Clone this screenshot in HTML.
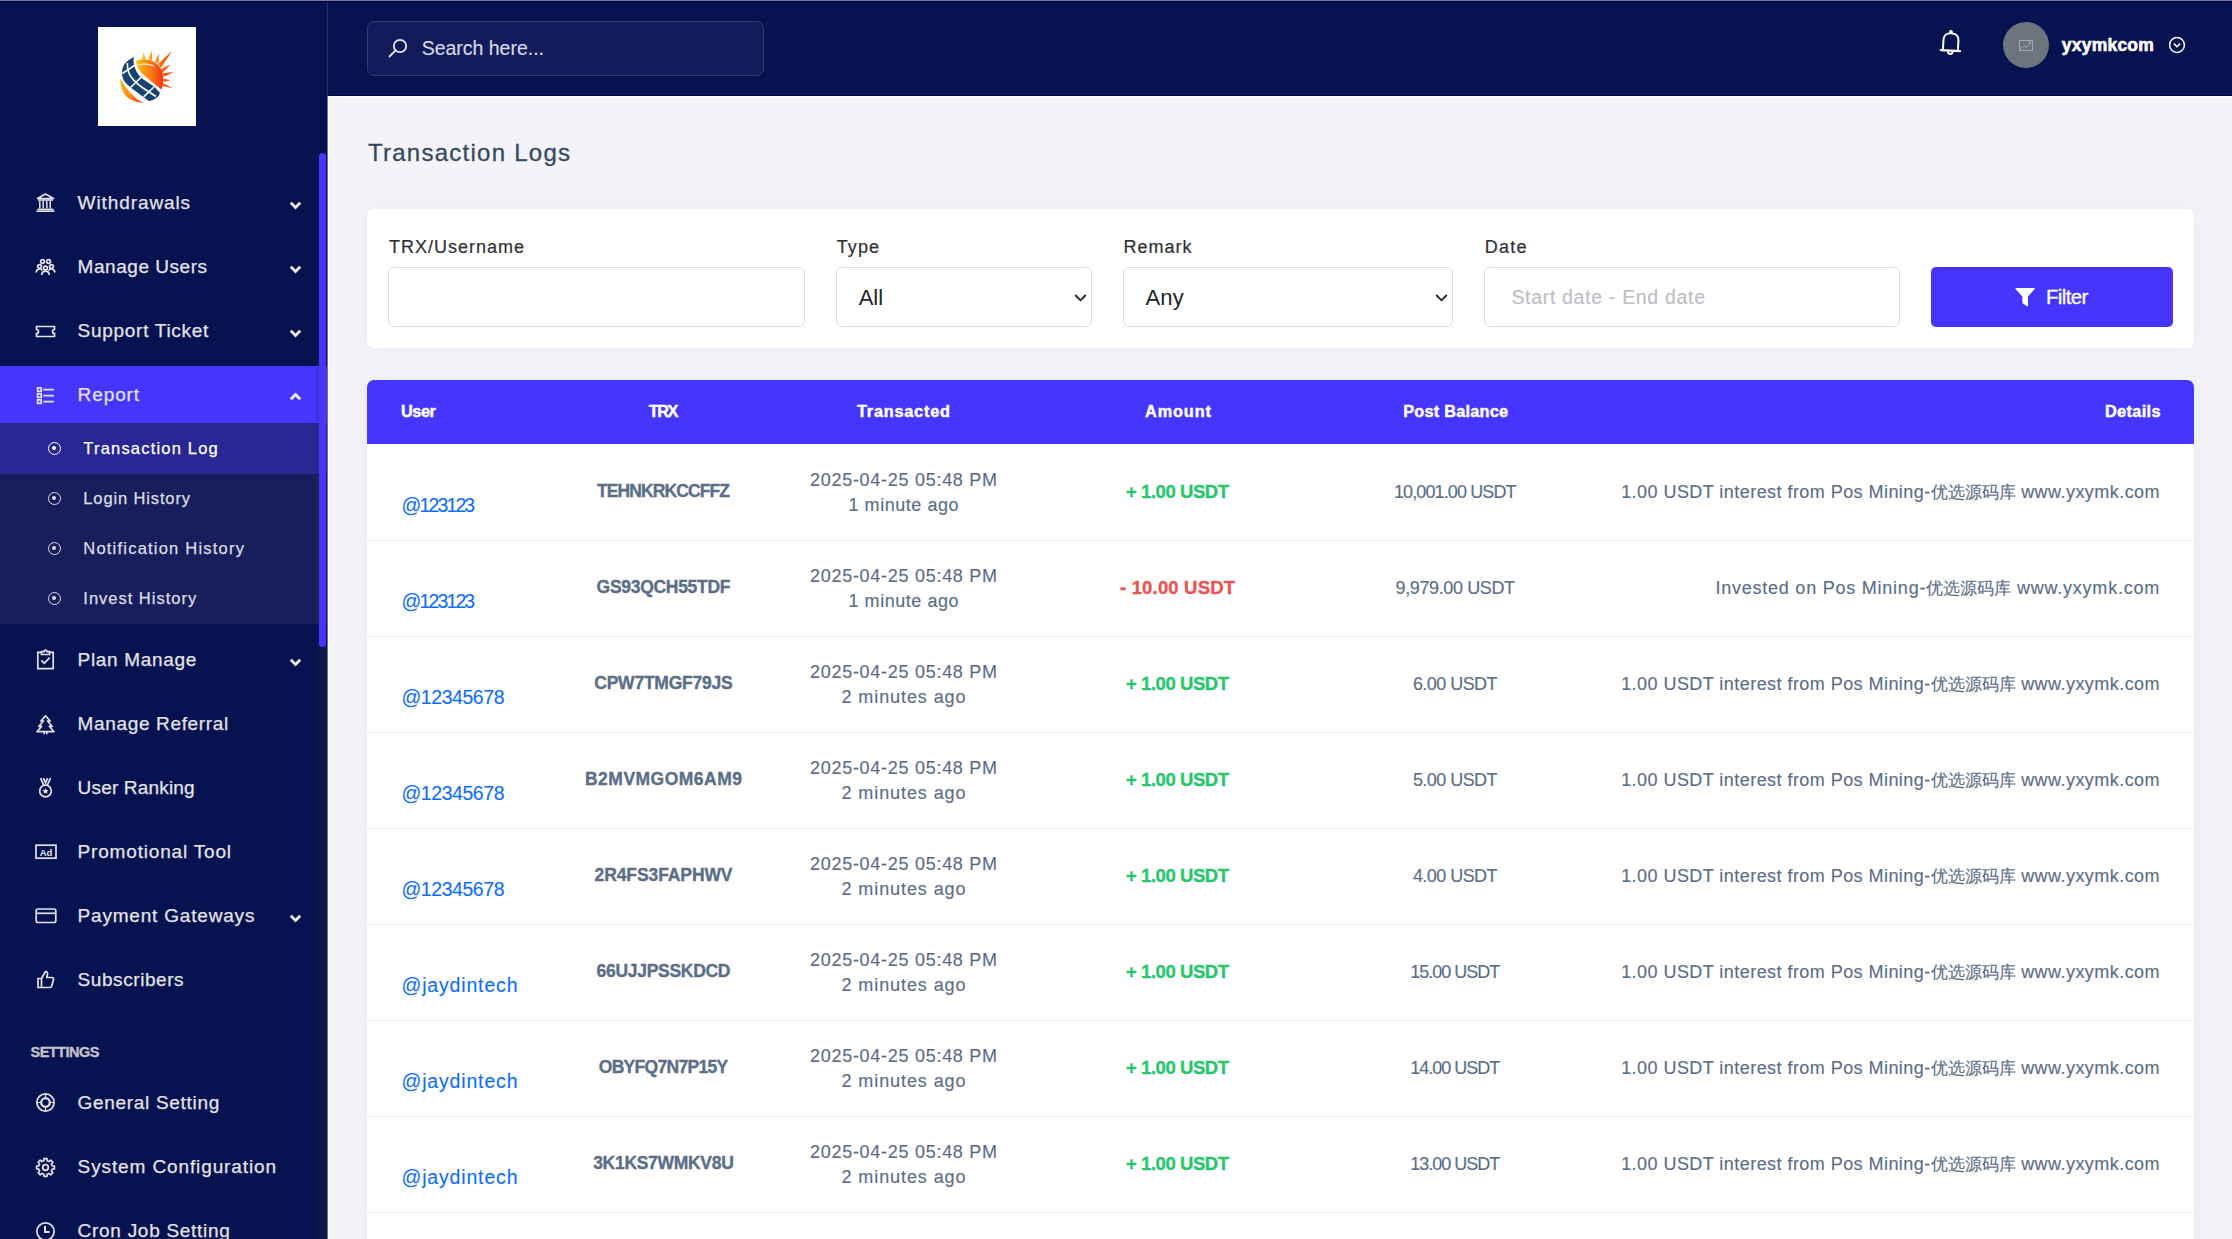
<!DOCTYPE html>
<html><head><meta charset="utf-8"><style>
*{box-sizing:border-box;margin:0;padding:0}
html,body{width:2232px;height:1239px;overflow:hidden}
body{font-family:"Liberation Sans",sans-serif;background:#f3f3f9;position:relative}
.tx{position:absolute;line-height:1;white-space:nowrap}
.ic{position:absolute}
.topline{position:absolute;left:0;top:0;width:2232px;height:1px;background:#7a80a3;z-index:50}
.topline2{position:absolute;left:0;top:1px;width:2232px;height:1px;background:#00033d;z-index:50}
.sb{position:absolute;left:0;top:0;width:327px;height:1239px;background:#071251;overflow:hidden}
.logo{position:absolute;left:97.6px;top:27px;width:98.7px;height:99.2px;background:#fff}
.track{position:absolute;left:316px;top:153px;width:11px;height:1086px;background:rgba(50,50,50,0.19);z-index:2}
.thumb{position:absolute;left:319px;top:153px;width:7px;height:494px;background:#4634ff;border-radius:4px;z-index:3}
.sbline{position:absolute;left:327px;top:0;width:1px;height:96px;background:#2b3163;z-index:5}
.mi{position:absolute;left:0;width:327px;height:57px}
.mi.act{background:#4634ff}
.sub{position:absolute;left:0;top:423px;width:327px;height:201px;background:#181e5b}
.si{position:absolute;left:0;width:327px;height:51px}
.si.act{background:#292793}
.dot{position:absolute;left:48.4px;width:13px;height:13px;border:1.7px solid #dcdde3;border-radius:50%}
.dot i{position:absolute;left:2.55px;top:2.55px;width:4.5px;height:4.5px;border-radius:50%}
.hd{position:absolute;left:328px;top:0;width:1904px;height:96px;background:#071251}
.hdb{position:absolute;left:328px;top:95px;width:1904px;height:1px;background:#000341}
.hdw{position:absolute;left:328px;top:96px;width:1904px;height:1px;background:#fff}
.vw{position:absolute;left:328px;top:96px;width:1px;height:1143px;background:#fff}
.vm{position:absolute;left:327px;top:96px;width:1px;height:1143px;background:#6f7396}
.search{position:absolute;left:367px;top:21px;width:397px;height:55px;background:#131c5a;border:1px solid #313a6f;border-radius:7px}
.avatar{position:absolute;left:2002.5px;top:21.5px;width:46px;height:46px;border-radius:50%;background:#6c757d}
.card{position:absolute;left:367px;top:209px;width:1827px;height:139px;background:#fff;border-radius:7px;box-shadow:0 0 22px rgba(40,40,90,0.045)}
.inp{position:absolute;top:267px;height:60px;border:1px solid #dcdee3;border-radius:6px;background:#fff}
.btn{position:absolute;left:1931px;top:267px;width:242px;height:60px;background:#4634ff;border-radius:5px}
.tcard{position:absolute;left:367px;top:380px;width:1827px;height:900px;background:#fff;border-radius:7px;box-shadow:0 0 22px rgba(40,40,90,0.045)}
.thd{position:absolute;left:367px;top:380px;width:1827px;height:64px;background:#4634ff;border-radius:7px 7px 0 0}
.rl{position:absolute;left:367px;width:1827px;height:1px;background:#ebecef}
.det{position:absolute;right:72px;font-size:18px;color:#5b6e88;-webkit-text-stroke:0.15px #5b6e88;letter-spacing:0.4px;line-height:22px;white-space:nowrap}
.cj{letter-spacing:0;font-size:17px;font-weight:300}

</style></head><body>
<div class="topline"></div><div class="topline2"></div>
<div class="sb"><div class="logo"><svg style="position:absolute;left:12.4px;top:18px" width="70" height="65" viewBox="0 0 70 65">
<defs>
<linearGradient id="sg" x1="0" y1="0" x2="1" y2="0"><stop offset="0" stop-color="#ffc10a"/><stop offset="0.55" stop-color="#fb7a17"/><stop offset="1" stop-color="#f2330f"/></linearGradient>
<linearGradient id="cg" x1="0" y1="0" x2="1" y2="1"><stop offset="0" stop-color="#ffc20c"/><stop offset="0.6" stop-color="#f98419"/><stop offset="1" stop-color="#f2350f"/></linearGradient>
</defs>
<g fill="url(#sg)">
<path d="M26 16 Q33 13.5 42 15.5 Q49 19 52 26 Q54 33 53 40 L51.5 44.5 Q44 39 36 32 Q29 26 27 21 Z"/>
<path d="M32 15 L33.6 7.5 L36 14.5Z M38.5 14.3 L41.4 5.5 L42.5 15 Z M45 16.5 L49 8.5 L48.5 18.5Z M48 19 L62 6 L51 23Z M51 24 L60.5 19.5 L52.5 28Z M53 28 L63.5 27.3 L53.5 32Z M53.5 33.5 L60.5 35.2 L53.5 37Z M53 38 L62.5 43 L52 41Z"/>
</g>
<path d="M27.5 20.2 Q36 17.5 44 21" fill="none" stroke="#fff" stroke-width="1.1"/>
<path d="M10 33.5 C10.5 42 13 48 17 52 C21 55.5 27 57.5 35 58 C29 56.5 25.5 53 22 49.5 C18 45.5 14 40 11.5 35.5 Z" fill="url(#cg)"/>
<path d="M24 12 Q18 14.5 14.5 19 Q11.5 24 12 30 Q13 36 17.8 40 Q21 43 24 45 L34 52.5 Q37 55 39.3 56 Q44 55 47.2 52.5 Q50 50 49.8 47.5 Q47 45 44.6 42 L32 33.5 Q27 29 25 23 Q23.3 18 23.5 15 Z" fill="#17436f"/>
<g fill="none" stroke="#fff" stroke-width="1.6">
<path d="M17.5 18 Q16.8 25 20.5 31 Q25 37.5 33 43 L46 51.5"/>
<path d="M12.3 28.5 L24.3 20.5"/>
<path d="M20.5 42.5 L31.5 32"/>
<path d="M33.6 51.8 L44 42"/>
</g>
</svg>
</div><div class="track"></div><div class="thumb"></div>
<div class="mi act" style="top:366px"></div>
<div class="sub"></div><div class="si act" style="top:423px"></div>
<svg class="ic" style="left:35px;top:192.0px" width="21" height="21" viewBox="0 0 21 21"><path d="M2.5 6.5 L10.5 2 L18.5 6.5 Z" fill="none" stroke="#e3e3e6" stroke-width="1.6" stroke-linejoin="round"/><rect x="3" y="7.2" width="15" height="1.6" fill="#e3e3e6"/><path d="M4.8 9v7.5M8.2 9v7.5M11.8 9v7.5M15.2 9v7.5" stroke="#e3e3e6" stroke-width="1.5"/><rect x="2.5" y="16.6" width="16" height="1.6" fill="#e3e3e6"/><rect x="1.5" y="18.4" width="18" height="1.6" fill="#e3e3e6"/></svg>
<span class="tx" style="left:77.60px;top:193.00px;font-size:19px;color:#e3e3e6;letter-spacing:0.905px;-webkit-text-stroke:0.25px #e3e3e6">Withdrawals</span>
<svg class="ic" style="left:288.6px;top:200.9px" width="13" height="9" viewBox="0 0 13 9"><path d="M1.8 1.8l4.7 4.7 4.7-4.7" fill="none" stroke="#ececee" stroke-width="2.9"/></svg>
<svg class="ic" style="left:35px;top:257.0px" width="21" height="21" viewBox="0 0 21 21"><g stroke="#e3e3e6" fill="none" stroke-width="1.7" stroke-width="1.4"><circle cx="7.5" cy="4.5" r="1.9"/><circle cx="13.5" cy="4.5" r="1.9"/><circle cx="4.5" cy="9.5" r="1.9"/><circle cx="16.5" cy="9.5" r="1.9"/><circle cx="10.5" cy="11" r="1.9"/><path d="M1 15.5c0.5-2.5 2-3.5 3.5-3.5s2.5 0.7 3 1.5M20 15.5c-0.5-2.5-2-3.5-3.5-3.5s-2.5 0.7-3 1.5M6.5 18c0.5-2.5 2-3.8 4-3.8s3.5 1.3 4 3.8"/></g></svg>
<span class="tx" style="left:77.60px;top:257.00px;font-size:19px;color:#e3e3e6;letter-spacing:0.541px;-webkit-text-stroke:0.25px #e3e3e6">Manage Users</span>
<svg class="ic" style="left:288.6px;top:264.9px" width="13" height="9" viewBox="0 0 13 9"><path d="M1.8 1.8l4.7 4.7 4.7-4.7" fill="none" stroke="#ececee" stroke-width="2.9"/></svg>
<svg class="ic" style="left:35px;top:320.5px" width="21" height="21" viewBox="0 0 21 21"><path d="M1.5 5.5h18v3a2 2 0 0 0 0 4v3h-18v-3a2 2 0 0 0 0-4z" stroke="#e3e3e6" fill="none" stroke-width="1.7"/></svg>
<span class="tx" style="left:77.60px;top:321.00px;font-size:19px;color:#e3e3e6;letter-spacing:0.712px;-webkit-text-stroke:0.25px #e3e3e6">Support Ticket</span>
<svg class="ic" style="left:288.6px;top:328.9px" width="13" height="9" viewBox="0 0 13 9"><path d="M1.8 1.8l4.7 4.7 4.7-4.7" fill="none" stroke="#ececee" stroke-width="2.9"/></svg>
<svg class="ic" style="left:35px;top:385.2px" width="21" height="21" viewBox="0 0 21 21"><g stroke="#e3e3e6" fill="none" stroke-width="1.7" stroke-width="1.35"><rect x="2.6" y="2.8" width="3.6" height="3.6"/><rect x="2.6" y="8.8" width="3.6" height="3.6"/><rect x="2.6" y="14.8" width="3.6" height="3.6"/></g><path d="M8.2 4.6h10.8M8.2 10.6h10.8M8.2 16.6h10.8" stroke="#e3e3e6" stroke-width="1.8"/></svg>
<span class="tx" style="left:77.60px;top:385.00px;font-size:19px;color:#e3e3e6;letter-spacing:0.900px;-webkit-text-stroke:0.25px #e3e3e6">Report</span>
<svg class="ic" style="left:288.6px;top:392.3px" width="13" height="9" viewBox="0 0 13 9"><path d="M1.8 7.2l4.7-4.7 4.7 4.7" fill="none" stroke="#ececee" stroke-width="2.9"/></svg>
<svg class="ic" style="left:35px;top:649.0px" width="21" height="21" viewBox="0 0 21 21"><g stroke="#e3e3e6" fill="none" stroke-width="1.7" stroke-width="1.6"><path d="M6.5 3.3H2.8v16.4h15.4V3.3h-3.7"/><path d="M6.5 5.5V2.6h2.6a1.4 1.4 0 0 1 2.8 0h2.6v2.9z"/><path d="M6.3 11.3l3 3 5.4-5.6"/></g></svg>
<span class="tx" style="left:77.60px;top:650.00px;font-size:19px;color:#e3e3e6;letter-spacing:0.675px;-webkit-text-stroke:0.25px #e3e3e6">Plan Manage</span>
<svg class="ic" style="left:288.6px;top:657.9px" width="13" height="9" viewBox="0 0 13 9"><path d="M1.8 1.8l4.7 4.7 4.7-4.7" fill="none" stroke="#ececee" stroke-width="2.9"/></svg>
<svg class="ic" style="left:35px;top:714.2px" width="21" height="21" viewBox="0 0 21 21"><g stroke="#e3e3e6" fill="none" stroke-width="1.7" stroke-width="1.6" stroke-linejoin="round"><path d="M10.5 1.8l-4.6 5.2h2.6l-4.6 5.3h2.8l-4.7 5.4h17l-4.7-5.4h2.8l-4.6-5.3h2.6z"/><path d="M9.2 17.7v2.6M11.8 17.7v2.6"/></g></svg>
<span class="tx" style="left:77.60px;top:714.00px;font-size:19px;color:#e3e3e6;letter-spacing:0.650px;-webkit-text-stroke:0.25px #e3e3e6">Manage Referral</span>
<svg class="ic" style="left:35px;top:777.0px" width="21" height="21" viewBox="0 0 21 21"><g stroke="#e3e3e6" fill="none" stroke-width="1.7" stroke-width="1.6"><path d="M5.5 1.2l3.3 7.2M15.5 1.2l-3.3 7.2M8.3 1.2l2.2 4.5 2.2-4.5"/><circle cx="10.5" cy="14" r="5.8"/></g><path d="M10.5 11.2l0.95 1.9 2.1 0.25-1.55 1.4 0.5 2.05-2-1.15-2 1.15 0.5-2.05-1.55-1.4 2.1-0.25z" fill="#e3e3e6"/></svg>
<span class="tx" style="left:77.60px;top:778.00px;font-size:19px;color:#e3e3e6;letter-spacing:0.173px;-webkit-text-stroke:0.25px #e3e3e6">User Ranking</span>
<svg class="ic" style="left:34.5px;top:841.0px" width="22" height="21" viewBox="0 0 22 21"><rect x="1" y="4.2" width="20" height="13" stroke="#e3e3e6" fill="none" stroke-width="1.7" stroke-width="1.8"/><text x="11" y="14.6" text-anchor="middle" font-family="Liberation Sans" font-weight="bold" font-size="9.5" fill="#e3e3e6">Ad</text></svg>
<span class="tx" style="left:77.60px;top:842.00px;font-size:19px;color:#e3e3e6;letter-spacing:0.820px;-webkit-text-stroke:0.25px #e3e3e6">Promotional Tool</span>
<svg class="ic" style="left:34.5px;top:905.0px" width="22" height="21" viewBox="0 0 22 21"><g stroke="#e3e3e6" fill="none" stroke-width="1.7" stroke-width="1.7"><rect x="1.2" y="4" width="19.6" height="13.5" rx="1.8"/><path d="M1.2 8.3h19.6"/></g></svg>
<span class="tx" style="left:77.60px;top:906.00px;font-size:19px;color:#e3e3e6;letter-spacing:0.803px;-webkit-text-stroke:0.25px #e3e3e6">Payment Gateways</span>
<svg class="ic" style="left:288.6px;top:913.9px" width="13" height="9" viewBox="0 0 13 9"><path d="M1.8 1.8l4.7 4.7 4.7-4.7" fill="none" stroke="#ececee" stroke-width="2.9"/></svg>
<svg class="ic" style="left:35px;top:969.0px" width="21" height="21" viewBox="0 0 21 21"><g stroke="#e3e3e6" fill="none" stroke-width="1.7" stroke-width="1.5" stroke-linejoin="round"><path d="M3 9.5h3.5v9H3z"/><path d="M6.5 9.5l4-7c1.5 0 2.3 1 2 2.5l-0.8 3.5h5.3c1 0 1.8 1 1.5 2l-1.8 6.5c-0.2 0.8-1 1.5-1.8 1.5H6.5"/></g></svg>
<span class="tx" style="left:77.60px;top:970.00px;font-size:19px;color:#e3e3e6;letter-spacing:0.570px;-webkit-text-stroke:0.25px #e3e3e6">Subscribers</span>
<svg class="ic" style="left:35px;top:1091.5px" width="21" height="21" viewBox="0 0 21 21"><g stroke="#e3e3e6" fill="none" stroke-width="1.7"><circle cx="10.5" cy="10.5" r="8.6" stroke-width="1.7"/><circle cx="10.5" cy="10.5" r="4.3" stroke-width="2.3"/><path d="M10.5 2.5v2.6M10.5 15.9v2.6M2.5 10.5h2.6M15.9 10.5h2.6" stroke-width="1.2"/></g></svg>
<span class="tx" style="left:77.60px;top:1092.50px;font-size:19px;color:#e3e3e6;letter-spacing:0.689px;-webkit-text-stroke:0.25px #e3e3e6">General Setting</span>
<svg class="ic" style="left:35px;top:1157.0px" width="21" height="21" viewBox="0 0 21 21"><g stroke="#e3e3e6" fill="none" stroke-width="1.7" stroke-width="1.6" stroke-linejoin="round"><path d="M19.38 9.02 L19.38 11.98 L17.20 12.16 L16.41 14.06 L17.82 15.73 L15.73 17.82 L14.06 16.41 L12.16 17.20 L11.98 19.38 L9.02 19.38 L8.84 17.20 L6.94 16.41 L5.27 17.82 L3.18 15.73 L4.59 14.06 L3.80 12.16 L1.62 11.98 L1.62 9.02 L3.80 8.84 L4.59 6.94 L3.18 5.27 L5.27 3.18 L6.94 4.59 L8.84 3.80 L9.02 1.62 L11.98 1.62 L12.16 3.80 L14.06 4.59 L15.73 3.18 L17.82 5.27 L16.41 6.94 L17.20 8.84Z"/><circle cx="10.5" cy="10.5" r="2.8" stroke-width="1.8"/></g></svg>
<span class="tx" style="left:77.60px;top:1156.50px;font-size:19px;color:#e3e3e6;letter-spacing:0.887px;-webkit-text-stroke:0.25px #e3e3e6">System Configuration</span>
<svg class="ic" style="left:35px;top:1220.5px" width="21" height="21" viewBox="0 0 21 21"><g stroke="#e3e3e6" fill="none" stroke-width="1.7" stroke-width="1.8"><circle cx="10.5" cy="10.5" r="8.6"/><path d="M10 5v6h4.5" stroke-width="2"/></g></svg>
<span class="tx" style="left:77.60px;top:1220.50px;font-size:19px;color:#e3e3e6;letter-spacing:0.717px;-webkit-text-stroke:0.25px #e3e3e6">Cron Job Setting</span>
<span class="dot" style="top:442px;border-color:#ffffff"><i style="background:#ffffff"></i></span>
<span class="tx" style="left:83.30px;top:439.95px;font-size:16.5px;color:#ffffff;letter-spacing:1.193px;-webkit-text-stroke:0.25px #ffffff">Transaction Log</span>
<span class="dot" style="top:492px;border-color:#dcdde3"><i style="background:#dcdde3"></i></span>
<span class="tx" style="left:83.30px;top:489.95px;font-size:16.5px;color:#dcdde3;letter-spacing:0.867px;-webkit-text-stroke:0.25px #dcdde3">Login History</span>
<span class="dot" style="top:542px;border-color:#dcdde3"><i style="background:#dcdde3"></i></span>
<span class="tx" style="left:83.30px;top:539.95px;font-size:16.5px;color:#dcdde3;letter-spacing:1.213px;-webkit-text-stroke:0.25px #dcdde3">Notification History</span>
<span class="dot" style="top:592px;border-color:#dcdde3"><i style="background:#dcdde3"></i></span>
<span class="tx" style="left:83.30px;top:589.95px;font-size:16.5px;color:#dcdde3;letter-spacing:0.996px;-webkit-text-stroke:0.25px #dcdde3">Invest History</span>
<span class="tx" style="left:30.50px;top:1044.75px;font-size:14.5px;color:#c3c3c8;letter-spacing:-0.529px;font-weight:bold;-webkit-text-stroke:0.35px #c3c3c8">SETTINGS</span>
</div>
<div class="sbline"></div><div class="hd"></div><div class="hdb"></div><div class="hdw"></div><div class="vw"></div><div class="vm"></div>
<div class="search"></div>
<svg style="position:absolute;left:388px;top:38px" width="20" height="20" viewBox="0 0 20 20"><circle cx="12" cy="8" r="6.2" fill="none" stroke="#e6e7ee" stroke-width="1.8"/><path d="M7.6 12.4L1.5 18.5" stroke="#e6e7ee" stroke-width="1.8" stroke-linecap="round"/></svg>
<span class="tx" style="left:421.70px;top:39.25px;font-size:19.5px;color:#d6d8e4;letter-spacing:-0.015px;-webkit-text-stroke:0.15px #d6d8e4">Search here...</span>
<svg style="position:absolute;left:1938px;top:28px" width="26" height="30" viewBox="0 0 26 30"><g transform="rotate(3 13 15)" fill="none" stroke="#fff" stroke-width="2"><path d="M5.3 22V12C5.300 7.800 8.300 5.200 12.800 5.200S20.300 7.800 20.300 12V22" stroke-linejoin="round"/><path d="M3.200 22.600H22.400" stroke-linecap="round" stroke-width="2.2"/><path d="M10.500 23.600a2.300 2.300 0 0 0 4.600 0"/></g><circle cx="12.900" cy="4" r="1.9" fill="#fff"/></svg>
<div class="avatar"><svg style="position:absolute;left:16px;top:18px" width="14" height="11" viewBox="0 0 14 11"><rect x="0.5" y="0.5" width="13" height="10" fill="none" stroke="#a3a8ad" stroke-width="1"/><path d="M1 9.5l4-4 2.5 2 4.5-4.5" fill="none" stroke="#a3a8ad" stroke-width="1"/><circle cx="11" cy="2.6" r="0.9" fill="none" stroke="#a3a8ad" stroke-width="0.8"/></svg></div>
<span class="tx" style="left:2061.80px;top:36.75px;font-size:17.5px;color:#ffffff;letter-spacing:0.221px;font-weight:bold;-webkit-text-stroke:0.6px #ffffff">yxymkcom</span>
<svg style="position:absolute;left:2168px;top:36px" width="18" height="18" viewBox="0 0 18 18"><circle cx="9" cy="9" r="7.4" fill="none" stroke="#fff" stroke-width="1.5"/><path d="M5.8 7.6l3.2 3.2 3.2-3.2" fill="none" stroke="#fff" stroke-width="1.5"/></svg>
<span class="tx" style="left:368.00px;top:141.20px;font-size:24px;color:#34495e;letter-spacing:1.253px;-webkit-text-stroke:0.3px #34495e">Transaction Logs</span>
<div class="card"></div>
<span class="tx" style="left:389.00px;top:238.20px;font-size:18px;color:#2f3033;letter-spacing:1.000px;-webkit-text-stroke:0.2px #2f3033">TRX/Username</span>
<span class="tx" style="left:836.70px;top:238.20px;font-size:18px;color:#2f3033;letter-spacing:1.100px;-webkit-text-stroke:0.2px #2f3033">Type</span>
<span class="tx" style="left:1123.50px;top:238.20px;font-size:18px;color:#2f3033;letter-spacing:1.000px;-webkit-text-stroke:0.2px #2f3033">Remark</span>
<span class="tx" style="left:1484.70px;top:238.20px;font-size:18px;color:#2f3033;letter-spacing:1.233px;-webkit-text-stroke:0.2px #2f3033">Date</span>
<div class="inp" style="left:388px;width:417px"></div>
<div class="inp" style="left:836px;width:256px"></div>
<div class="inp" style="left:1123px;width:330px"></div>
<div class="inp" style="left:1484px;width:416px"></div>
<span class="tx" style="left:858.70px;top:286.70px;font-size:22px;color:#212529;letter-spacing:0.000px">All</span>
<svg style="position:absolute;left:1073.5px;top:293px" width="13" height="10" viewBox="0 0 13 10"><path d="M1.2 2l5.3 5.3 5.3-5.3" fill="none" stroke="#222" stroke-width="1.8"/></svg>
<span class="tx" style="left:1145.50px;top:286.70px;font-size:22px;color:#212529;letter-spacing:0.200px">Any</span>
<svg style="position:absolute;left:1434.5px;top:293px" width="13" height="10" viewBox="0 0 13 10"><path d="M1.2 2l5.3 5.3 5.3-5.3" fill="none" stroke="#222" stroke-width="1.8"/></svg>
<span class="tx" style="left:1511.40px;top:288.05px;font-size:19.5px;color:#bcbec6;letter-spacing:0.683px;-webkit-text-stroke:0.15px #bcbec6">Start date - End date</span>
<div class="btn"></div>
<svg style="position:absolute;left:2014.5px;top:287.5px" width="20" height="19" viewBox="0 0 20 19"><path d="M1 0.7h18.2l-6.8 7.6v9.4l-4.4-2.9v-6.5z" fill="#fff" stroke="#fff" stroke-width="1.2" stroke-linejoin="round"/></svg>
<span class="tx" style="left:2046.00px;top:286.85px;font-size:20.5px;color:#ffffff;letter-spacing:-0.650px;-webkit-text-stroke:0.3px #ffffff">Filter</span>
<div class="tcard"></div><div class="thd"></div>
<span class="tx" style="left:401.00px;top:402.85px;font-size:16.3px;color:#fff;letter-spacing:-0.417px;font-weight:bold;-webkit-text-stroke:0.45px #fff">User</span>
<span class="tx" style="left:648.80px;top:402.85px;font-size:16.3px;color:#fff;letter-spacing:-1.500px;font-weight:bold;-webkit-text-stroke:0.45px #fff">TRX</span>
<span class="tx" style="left:857.00px;top:402.85px;font-size:16.3px;color:#fff;letter-spacing:0.772px;font-weight:bold;-webkit-text-stroke:0.45px #fff">Transacted</span>
<span class="tx" style="left:1145.00px;top:402.85px;font-size:16.3px;color:#fff;letter-spacing:0.890px;font-weight:bold;-webkit-text-stroke:0.45px #fff">Amount</span>
<span class="tx" style="left:1403.20px;top:402.85px;font-size:16.3px;color:#fff;letter-spacing:0.241px;font-weight:bold;-webkit-text-stroke:0.45px #fff">Post Balance</span>
<span class="tx" style="left:2105.00px;top:402.85px;font-size:16.3px;color:#fff;letter-spacing:0.342px;font-weight:bold;-webkit-text-stroke:0.45px #fff">Details</span>
<span class="tx" style="left:401.50px;top:496.15px;font-size:19.5px;color:#0d6efd;letter-spacing:-1.858px;-webkit-text-stroke:0.1px #0d6efd">@123123</span>
<span class="tx" style="left:597.00px;top:483.15px;font-size:17.5px;color:#5b6e88;letter-spacing:-0.900px;font-weight:bold;-webkit-text-stroke:0.35px #5b6e88">TEHNKRKCCFFZ</span>
<span class="tx" style="left:810.00px;top:470.60px;font-size:18px;color:#5b6e88;letter-spacing:0.717px;-webkit-text-stroke:0.15px #5b6e88">2025-04-25 05:48 PM</span>
<span class="tx" style="left:848.50px;top:495.50px;font-size:18px;color:#5b6e88;letter-spacing:0.541px;-webkit-text-stroke:0.15px #5b6e88">1 minute ago</span>
<span class="tx" style="left:1126.00px;top:482.75px;font-size:18.5px;color:#28c76f;letter-spacing:-0.445px;font-weight:bold;-webkit-text-stroke:0.35px #28c76f">+ 1.00 USDT</span>
<span class="tx" style="left:1394.00px;top:482.90px;font-size:18px;color:#5b6e88;letter-spacing:-0.892px;-webkit-text-stroke:0.15px #5b6e88">10,001.00 USDT</span>
<span class="det" style="top:481px;letter-spacing:0.45px">1.00 USDT interest from Pos Mining-<span class="cj">优选源码库</span> www.yxymk.com</span>
<div class="rl" style="top:539.5px"></div>
<span class="tx" style="left:401.50px;top:592.15px;font-size:19.5px;color:#0d6efd;letter-spacing:-1.858px;-webkit-text-stroke:0.1px #0d6efd">@123123</span>
<span class="tx" style="left:596.60px;top:579.15px;font-size:17.5px;color:#5b6e88;letter-spacing:-0.300px;font-weight:bold;-webkit-text-stroke:0.35px #5b6e88">GS93QCH55TDF</span>
<span class="tx" style="left:810.00px;top:566.60px;font-size:18px;color:#5b6e88;letter-spacing:0.717px;-webkit-text-stroke:0.15px #5b6e88">2025-04-25 05:48 PM</span>
<span class="tx" style="left:848.50px;top:591.50px;font-size:18px;color:#5b6e88;letter-spacing:0.541px;-webkit-text-stroke:0.15px #5b6e88">1 minute ago</span>
<span class="tx" style="left:1120.00px;top:578.75px;font-size:18.5px;color:#ea5455;letter-spacing:0.173px;font-weight:bold;-webkit-text-stroke:0.35px #ea5455">- 10.00 USDT</span>
<span class="tx" style="left:1395.50px;top:578.90px;font-size:18px;color:#5b6e88;letter-spacing:-0.379px;-webkit-text-stroke:0.15px #5b6e88">9,979.00 USDT</span>
<span class="det" style="top:577px;letter-spacing:0.77px">Invested on Pos Mining-<span class="cj">优选源码库</span> www.yxymk.com</span>
<div class="rl" style="top:635.5px"></div>
<span class="tx" style="left:401.50px;top:688.15px;font-size:19.5px;color:#0d6efd;letter-spacing:-0.444px;-webkit-text-stroke:0.1px #0d6efd">@12345678</span>
<span class="tx" style="left:594.25px;top:675.15px;font-size:17.5px;color:#5b6e88;letter-spacing:-0.227px;font-weight:bold;-webkit-text-stroke:0.35px #5b6e88">CPW7TMGF79JS</span>
<span class="tx" style="left:810.00px;top:662.60px;font-size:18px;color:#5b6e88;letter-spacing:0.717px;-webkit-text-stroke:0.15px #5b6e88">2025-04-25 05:48 PM</span>
<span class="tx" style="left:841.50px;top:687.50px;font-size:18px;color:#5b6e88;letter-spacing:0.913px;-webkit-text-stroke:0.15px #5b6e88">2 minutes ago</span>
<span class="tx" style="left:1126.00px;top:674.75px;font-size:18.5px;color:#28c76f;letter-spacing:-0.445px;font-weight:bold;-webkit-text-stroke:0.35px #28c76f">+ 1.00 USDT</span>
<span class="tx" style="left:1412.90px;top:674.90px;font-size:18px;color:#5b6e88;letter-spacing:-0.544px;-webkit-text-stroke:0.15px #5b6e88">6.00 USDT</span>
<span class="det" style="top:673px;letter-spacing:0.45px">1.00 USDT interest from Pos Mining-<span class="cj">优选源码库</span> www.yxymk.com</span>
<div class="rl" style="top:731.5px"></div>
<span class="tx" style="left:401.50px;top:784.15px;font-size:19.5px;color:#0d6efd;letter-spacing:-0.444px;-webkit-text-stroke:0.1px #0d6efd">@12345678</span>
<span class="tx" style="left:585.00px;top:771.15px;font-size:17.5px;color:#5b6e88;letter-spacing:0.482px;font-weight:bold;-webkit-text-stroke:0.35px #5b6e88">B2MVMGOM6AM9</span>
<span class="tx" style="left:810.00px;top:758.60px;font-size:18px;color:#5b6e88;letter-spacing:0.717px;-webkit-text-stroke:0.15px #5b6e88">2025-04-25 05:48 PM</span>
<span class="tx" style="left:841.50px;top:783.50px;font-size:18px;color:#5b6e88;letter-spacing:0.913px;-webkit-text-stroke:0.15px #5b6e88">2 minutes ago</span>
<span class="tx" style="left:1126.00px;top:770.75px;font-size:18.5px;color:#28c76f;letter-spacing:-0.445px;font-weight:bold;-webkit-text-stroke:0.35px #28c76f">+ 1.00 USDT</span>
<span class="tx" style="left:1412.90px;top:770.90px;font-size:18px;color:#5b6e88;letter-spacing:-0.544px;-webkit-text-stroke:0.15px #5b6e88">5.00 USDT</span>
<span class="det" style="top:769px;letter-spacing:0.45px">1.00 USDT interest from Pos Mining-<span class="cj">优选源码库</span> www.yxymk.com</span>
<div class="rl" style="top:827.5px"></div>
<span class="tx" style="left:401.50px;top:880.15px;font-size:19.5px;color:#0d6efd;letter-spacing:-0.444px;-webkit-text-stroke:0.1px #0d6efd">@12345678</span>
<span class="tx" style="left:594.50px;top:867.15px;font-size:17.5px;color:#5b6e88;letter-spacing:-0.095px;font-weight:bold;-webkit-text-stroke:0.35px #5b6e88">2R4FS3FAPHWV</span>
<span class="tx" style="left:810.00px;top:854.60px;font-size:18px;color:#5b6e88;letter-spacing:0.717px;-webkit-text-stroke:0.15px #5b6e88">2025-04-25 05:48 PM</span>
<span class="tx" style="left:841.50px;top:879.50px;font-size:18px;color:#5b6e88;letter-spacing:0.913px;-webkit-text-stroke:0.15px #5b6e88">2 minutes ago</span>
<span class="tx" style="left:1126.00px;top:866.75px;font-size:18.5px;color:#28c76f;letter-spacing:-0.445px;font-weight:bold;-webkit-text-stroke:0.35px #28c76f">+ 1.00 USDT</span>
<span class="tx" style="left:1412.90px;top:866.90px;font-size:18px;color:#5b6e88;letter-spacing:-0.544px;-webkit-text-stroke:0.15px #5b6e88">4.00 USDT</span>
<span class="det" style="top:865px;letter-spacing:0.45px">1.00 USDT interest from Pos Mining-<span class="cj">优选源码库</span> www.yxymk.com</span>
<div class="rl" style="top:923.5px"></div>
<span class="tx" style="left:401.50px;top:976.15px;font-size:19.5px;color:#0d6efd;letter-spacing:0.840px;-webkit-text-stroke:0.1px #0d6efd">@jaydintech</span>
<span class="tx" style="left:596.50px;top:963.15px;font-size:17.5px;color:#5b6e88;letter-spacing:-0.286px;font-weight:bold;-webkit-text-stroke:0.35px #5b6e88">66UJJPSSKDCD</span>
<span class="tx" style="left:810.00px;top:950.60px;font-size:18px;color:#5b6e88;letter-spacing:0.717px;-webkit-text-stroke:0.15px #5b6e88">2025-04-25 05:48 PM</span>
<span class="tx" style="left:841.50px;top:975.50px;font-size:18px;color:#5b6e88;letter-spacing:0.913px;-webkit-text-stroke:0.15px #5b6e88">2 minutes ago</span>
<span class="tx" style="left:1126.00px;top:962.75px;font-size:18.5px;color:#28c76f;letter-spacing:-0.445px;font-weight:bold;-webkit-text-stroke:0.35px #28c76f">+ 1.00 USDT</span>
<span class="tx" style="left:1410.25px;top:962.90px;font-size:18px;color:#5b6e88;letter-spacing:-1.006px;-webkit-text-stroke:0.15px #5b6e88">15.00 USDT</span>
<span class="det" style="top:961px;letter-spacing:0.45px">1.00 USDT interest from Pos Mining-<span class="cj">优选源码库</span> www.yxymk.com</span>
<div class="rl" style="top:1019.5px"></div>
<span class="tx" style="left:401.50px;top:1072.15px;font-size:19.5px;color:#0d6efd;letter-spacing:0.840px;-webkit-text-stroke:0.1px #0d6efd">@jaydintech</span>
<span class="tx" style="left:598.75px;top:1059.15px;font-size:17.5px;color:#5b6e88;letter-spacing:-0.695px;font-weight:bold;-webkit-text-stroke:0.35px #5b6e88">OBYFQ7N7P15Y</span>
<span class="tx" style="left:810.00px;top:1046.60px;font-size:18px;color:#5b6e88;letter-spacing:0.717px;-webkit-text-stroke:0.15px #5b6e88">2025-04-25 05:48 PM</span>
<span class="tx" style="left:841.50px;top:1071.50px;font-size:18px;color:#5b6e88;letter-spacing:0.913px;-webkit-text-stroke:0.15px #5b6e88">2 minutes ago</span>
<span class="tx" style="left:1126.00px;top:1058.75px;font-size:18.5px;color:#28c76f;letter-spacing:-0.445px;font-weight:bold;-webkit-text-stroke:0.35px #28c76f">+ 1.00 USDT</span>
<span class="tx" style="left:1410.25px;top:1058.90px;font-size:18px;color:#5b6e88;letter-spacing:-1.006px;-webkit-text-stroke:0.15px #5b6e88">14.00 USDT</span>
<span class="det" style="top:1057px;letter-spacing:0.45px">1.00 USDT interest from Pos Mining-<span class="cj">优选源码库</span> www.yxymk.com</span>
<div class="rl" style="top:1115.5px"></div>
<span class="tx" style="left:401.50px;top:1168.15px;font-size:19.5px;color:#0d6efd;letter-spacing:0.840px;-webkit-text-stroke:0.1px #0d6efd">@jaydintech</span>
<span class="tx" style="left:593.20px;top:1155.15px;font-size:17.5px;color:#5b6e88;letter-spacing:-0.300px;font-weight:bold;-webkit-text-stroke:0.35px #5b6e88">3K1KS7WMKV8U</span>
<span class="tx" style="left:810.00px;top:1142.60px;font-size:18px;color:#5b6e88;letter-spacing:0.717px;-webkit-text-stroke:0.15px #5b6e88">2025-04-25 05:48 PM</span>
<span class="tx" style="left:841.50px;top:1167.50px;font-size:18px;color:#5b6e88;letter-spacing:0.913px;-webkit-text-stroke:0.15px #5b6e88">2 minutes ago</span>
<span class="tx" style="left:1126.00px;top:1154.75px;font-size:18.5px;color:#28c76f;letter-spacing:-0.445px;font-weight:bold;-webkit-text-stroke:0.35px #28c76f">+ 1.00 USDT</span>
<span class="tx" style="left:1410.25px;top:1154.90px;font-size:18px;color:#5b6e88;letter-spacing:-1.006px;-webkit-text-stroke:0.15px #5b6e88">13.00 USDT</span>
<span class="det" style="top:1153px;letter-spacing:0.45px">1.00 USDT interest from Pos Mining-<span class="cj">优选源码库</span> www.yxymk.com</span>
<div class="rl" style="top:1211.5px"></div>
</body></html>
